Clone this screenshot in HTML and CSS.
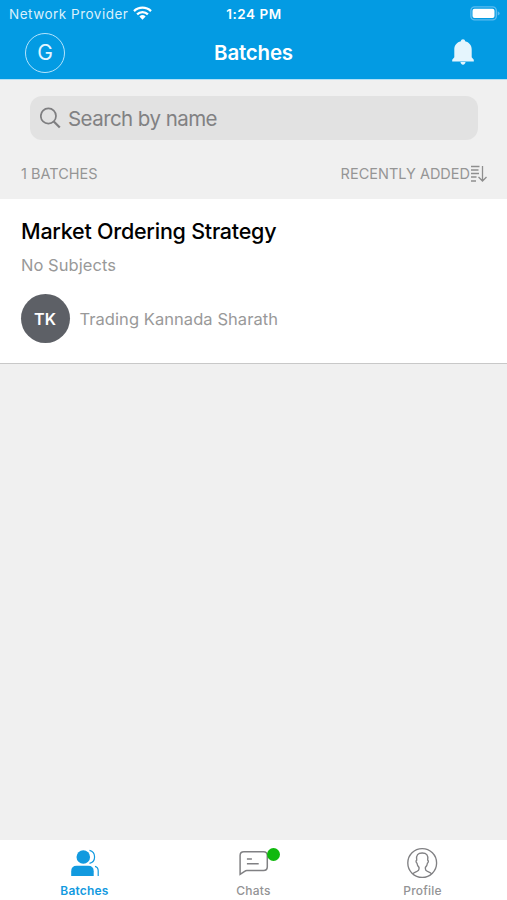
FILE: index.html
```html
<!DOCTYPE html>
<html lang="en">
<head>
<meta charset="utf-8">
<meta name="viewport" content="width=device-width, initial-scale=1">
<title>Batches</title>
<link rel="stylesheet" href="styles.css">
</head>
<body>
<div class="app">
  <header class="header">
    <div class="status">
      <div class="carrier"><span class="carrier-name">Network Provider</span>
        <svg class="wifi" width="19" height="14" viewBox="0 0 19 14"><g fill="none" stroke="#fff" stroke-width="2.3"><path d="M1 5.1a12.2 12.2 0 0 1 17 0"/><path d="M4.1 8.4a7.7 7.7 0 0 1 10.8 0"/></g><path fill="#fff" d="M6.4 10.4a4.5 4.5 0 0 1 6.2 0L9.5 13.7z"/></svg>
      </div>
      <span class="time">1:24 PM</span>
      <svg class="battery" width="31" height="15" viewBox="0 0 31 15"><rect x=".9" y=".9" width="25.4" height="13" rx="3.7" fill="none" stroke="#5cbcf0" stroke-width="1.4"/><rect x="2.5" y="2.7" width="22" height="9.2" rx="2" fill="#fff"/><path d="M27.7 5.2q2 .7 2 2.2t-2 2.2z" fill="#5cbcf0"/></svg>
    </div>
    <div class="navbar">
      <div class="account">G</div>
      <h1 class="title">Batches</h1>
      <svg class="bell" width="22" height="27" viewBox="0 0 22 27"><path fill="#e5f5fd" d="M11 .3c1.2 0 2.100.8 2.100 1.900 4 .9 6.600 4.100 6.600 8.300v7.800l2.100 2.400v1.700H.2v-1.700l2.100-2.400v-7.800c0-4.200 2.600-7.400 6.600-8.300C8.900 1.100 9.800.3 11 .3z"/><path fill="#e5f5fd" d="M8.500 23.100h5c0 1.500-1.100 2.600-2.500 2.600s-2.500-1.100-2.500-2.600z"/></svg>
    </div>
  </header>
  <main class="content">
    <div class="search">
      <svg width="22" height="22" viewBox="0 0 22 22" fill="none" stroke="#7e7e80"><circle cx="8.400" cy="9" r="7.600" stroke-width="1.700"/><path d="M13.800 14.500l6 6" stroke-width="2.200"/></svg>
      <span class="placeholder">Search by name</span>
    </div>
    <div class="summary">
      <span class="count">1 BATCHES</span>
      <div class="sort"><span class="sort-label">RECENTLY ADDED</span><svg width="17" height="18" viewBox="0 0 17 18" fill="none" stroke="#8e8e8e" stroke-width="1.300"><path d="M1 1.500h8.500M1 5h7.500M1 8.500h8M1 12h5.500M1 16h5M12.500 1v14.500M8.500 12l4 4 4-4"/></svg></div>
    </div>
    <article class="card">
      <h2 class="batch">Market Ordering Strategy</h2>
      <p class="subjects">No Subjects</p>
      <div class="owner"><div class="avatar">TK</div><span class="owner-name">Trading Kannada Sharath</span></div>
    </article>
  </main>
  <nav class="tabs">
    <div class="tab active">
      <svg width="34" height="30" viewBox="0 0 34 30"><circle cx="15.300" cy="8" r="6.800" fill="#129adf"/><path fill="#129adf" d="M3.200 27v-4.800q0-5.500 5.500-5.500h11.500q5.500 0 5.500 5.500v4.800z"/><path d="M21.500 1.400a6.700 6.700 0 0 1 0 13M27 17.300q3.200.8 3.200 4.500v5.200" fill="none" stroke="#129adf" stroke-width="1.200"/></svg>
      <span class="label label-batches">Batches</span>
    </div>
    <div class="tab">
      <div class="chat-icon"><svg width="34" height="30" viewBox="0 0 34 30" fill="none" stroke="#808083" stroke-width="1.500"><path d="M3.100 25.300V6.500q0-3.800 3.800-3.800h19.600q3.800 0 3.800 3.800v11.200q0 3.800-3.800 3.800H9.900q-1.200 0-2.300.9z"/><path d="M9.900 10h5M9.900 14.700h11.800"/></svg><span class="badge"></span></div>
      <span class="label label-chats">Chats</span>
    </div>
    <div class="tab">
      <svg width="34" height="30" viewBox="0 0 34 30" fill="none" stroke="#808083" stroke-width="1.350"><g transform="translate(-.8 .2)"><circle cx="17" cy="13.800" r="14.400"/><path d="M7.400 24.800q.9-1.500 4.300-2.700 2.100-.8 2.100-2.400v-1.500c-1.300-1-1.800-2.400-2-4.200-1.200-1-1.200-2.700-.3-3.100-.8-5 1.300-7.100 5.500-7.100s6.300 2.100 5.500 7.100c.9.400.9 2.100-.3 3.100-.2 1.800-.7 3.200-2 4.200v1.500q0 1.600 2.100 2.400 3.400 1.200 4.300 2.700"/></g></svg>
      <span class="label label-profile">Profile</span>
    </div>
  </nav>
</div>
</body>
</html>
```
FILE: styles.css
```css
* { box-sizing: border-box; }
body { margin: 0; font-family: Inter, "Liberation Sans", sans-serif; }
.app { width: 507px; height: 900px; display: flex; flex-direction: column; background: #f0f0f0; overflow: hidden; }
span, h1, h2, p { white-space: nowrap; margin: 0; }
svg { display: block; flex: none; }

.header { height: 80px; background: #039be3; color: #fff; border-bottom: 1px solid #b3e0f6; }
.status { height: 27px; display: grid; grid-template-columns: 1fr auto 1fr; align-items: center; padding: 0 8px 0 9px; }
.carrier { display: flex; align-items: center; gap: 5px; color: #d9f0fc; }
.carrier-name { font-size: 13.5px; letter-spacing: .5px; }
.wifi { margin-top: -2px; }
.time { font-size: 13.5px; font-weight: 600; letter-spacing: .5px; }
.battery { justify-self: end; margin-right: -2px; }
.navbar { height: 51px; display: grid; grid-template-columns: 1fr auto 1fr; align-items: center; padding: 0 25px; }
.account { width: 40px; height: 40px; border: 1.2px solid #b5e4fc; border-radius: 50%; display: flex; align-items: center; justify-content: center; font-size: 21px; color: #e4f6ff; }
.title { font-size: 20.5px; font-weight: 600; line-height: 26px; letter-spacing: -.2px; }
.bell { justify-self: end; margin-right: 8px; }

.content { flex: 1; }
.search { height: 44px; margin: 16px 29px 0 30px; padding: 0 10px; border-radius: 12px; background: #e2e2e2; color: #818183; display: flex; align-items: center; gap: 6px; }
.placeholder { font-size: 20.5px; letter-spacing: -.56px; }
.summary { height: 59px; padding: 8px 20px 0 21px; display: flex; align-items: center; justify-content: space-between; color: #959595; font-size: 14.5px; }
.sort { display: flex; align-items: center; }

.card { height: 165px; background: #fff; border-bottom: 1px solid #c8c8c8; padding: 17px 21px 0; }
.batch { font-size: 21.5px; line-height: 30px; font-weight: 500; letter-spacing: -.24px; color: #000; }
.subjects { font-size: 16.5px; line-height: 22px; margin-top: 8px; color: #999; letter-spacing: .05px; }
.owner { display: flex; align-items: center; gap: 10px; margin-top: 18px; color: #999; }
.avatar { width: 49px; height: 49px; margin-left: -.5px; border-radius: 50%; background: #5d6066; color: #fff; display: flex; align-items: center; justify-content: center; font-size: 16px; font-weight: 600; }
.owner-name { font-size: 16.5px; letter-spacing: .06px; }

.tabs { height: 60px; background: #fff; display: grid; grid-template-columns: repeat(3, 169px); color: #939395; }
.tab { display: flex; flex-direction: column; align-items: center; padding-top: 9px; }
.tab svg { overflow: visible; }
.active { color: #129adf; }
.label { font-size: 12px; line-height: 16px; margin-top: 4px; font-weight: 500; letter-spacing: .2px; }
.label-batches { font-weight: 600; }
.chat-icon { position: relative; }
.badge { position: absolute; left: 30px; top: -1px; width: 13px; height: 13px; border-radius: 50%; background: #10b90e; }
```
